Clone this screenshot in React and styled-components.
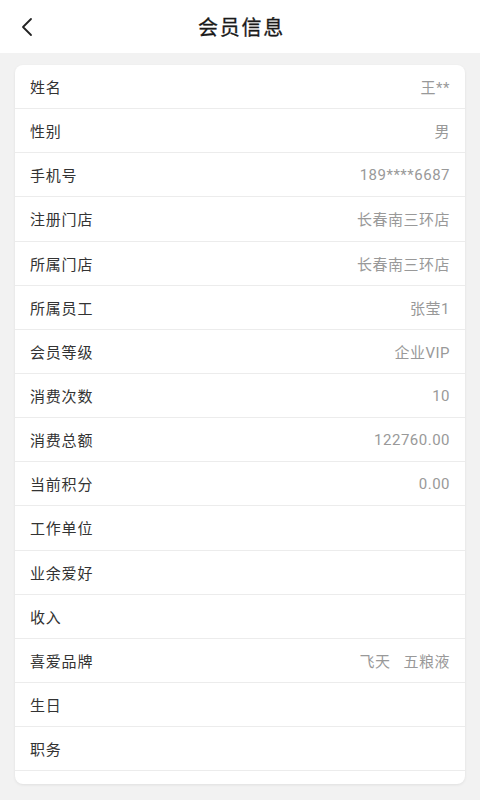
import React from 'react'
import styled, { createGlobalStyle } from 'styled-components'

const GlobalStyle = createGlobalStyle`
  html, body {
    margin: 0;
    padding: 0;
    background: #f2f2f2;
    font-family: "Roboto", "Noto Sans CJK SC", sans-serif;
  }
`

const fields = [
  { label: '姓名', value: '王**' },
  { label: '性别', value: '男' },
  { label: '手机号', value: '189****6687' },
  { label: '注册门店', value: '长春南三环店' },
  { label: '所属门店', value: '长春南三环店' },
  { label: '所属员工', value: '张莹1' },
  { label: '会员等级', value: '企业VIP' },
  { label: '消费次数', value: '10' },
  { label: '消费总额', value: '122760.00' },
  { label: '当前积分', value: '0.00' },
  { label: '工作单位', value: '' },
  { label: '业余爱好', value: '' },
  { label: '收入', value: '' },
  { label: '喜爱品牌', value: ['飞天', '五粮液'] },
  { label: '生日', value: '' },
  { label: '职务', value: '' },
]

const App = () => {
  return (
    <Page>
      <GlobalStyle />
      <Header>
        <BackButton>
          <svg width="14" height="20" viewBox="0 0 14 20" fill="none">
            <path d="M11 2 L3 10 L11 18" stroke="#222" strokeWidth="1.8" strokeLinecap="round" strokeLinejoin="round" />
          </svg>
        </BackButton>
        <Title>会员信息</Title>
      </Header>
      <Card>
        {fields.map((f) => (
          <Row key={f.label}>
            <Label>{f.label}</Label>
            <Value>
              {Array.isArray(f.value)
                ? f.value.map((v) => <Tag key={v}>{v}</Tag>)
                : f.value}
            </Value>
          </Row>
        ))}
      </Card>
    </Page>
  )
}

const Page = styled.div`
  width: 480px;
  min-height: 800px;
  background: #f2f2f2;
`

const Header = styled.header`
  position: relative;
  height: 53px;
  background: #fff;
  display: flex;
  align-items: center;
  justify-content: center;
`

const BackButton = styled.div`
  position: absolute;
  left: 20px;
  top: 17px;
  display: flex;
`

const Title = styled.h1`
  margin: 0 0 0 3px;
  font-family: "Noto Sans CJK SC", sans-serif;
  font-size: 20px;
  font-weight: 400;
  color: #1a1a1a;
  letter-spacing: 1.8px;
  -webkit-text-stroke: 0.3px #1a1a1a;
`

const Card = styled.section`
  margin: 12px 15px 0;
  background: #fff;
  border-radius: 8px;
  padding-bottom: 13px;
  box-shadow: 0 1px 3px rgba(0, 0, 0, 0.08);
`

const Row = styled.div`
  height: 44.15px;
  box-sizing: border-box;
  display: flex;
  align-items: center;
  justify-content: space-between;
  padding: 0 15px;
  border-bottom: 1px solid #ececec;
`

const Label = styled.span`
  font-family: "Noto Sans CJK SC", sans-serif;
  font-size: 15px;
  color: #333;
  letter-spacing: 0.8px;
`

const Value = styled.span`
  display: flex;
  gap: 13px;
  font-size: 15px;
  color: #999;
  letter-spacing: 0.5px;
`

const Tag = styled.span``

export default App
